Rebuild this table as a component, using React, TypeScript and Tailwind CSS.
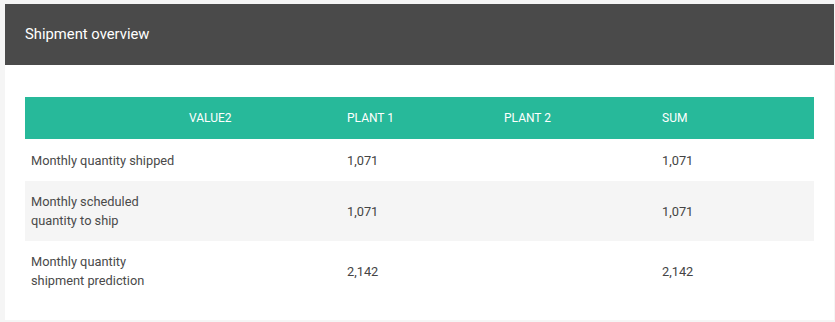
import React from "react";

const rows = [
  { label: ["Monthly quantity shipped"], p1: "1,071", p2: "", sum: "1,071", h: "h-[42px]", bg: "bg-white" },
  { label: ["Monthly scheduled", "quantity to ship"], p1: "1,071", p2: "", sum: "1,071", h: "h-[60px]", bg: "bg-[#f5f5f5]" },
  { label: ["Monthly quantity", "shipment prediction"], p1: "2,142", p2: "", sum: "2,142", h: "h-[60px]", bg: "bg-white" },
];

export default function App() {
  return (
    <div
      className="w-[835px] h-[322px] bg-[#f5f5f5] pt-[4px] pl-[5px] pr-[1px]"
      style={{ fontFamily: "Roboto, 'Liberation Sans', sans-serif" }}
    >
      <div className="bg-white h-[316px] w-[829px]">
        <div className="h-[61px] bg-[#4a4a4a] flex items-center pl-[20px] text-white text-[14.8px]">
          Shipment overview
        </div>
        <div className="pt-[32px] px-[20px]">
          <div className="grid grid-cols-[316px_157px_158px_158px] h-[42px] bg-[#27b99a] text-white text-[12px] items-center uppercase">
            <div className="pl-[164px]">Value2</div>
            <div className="pl-[6px]">Plant 1</div>
            <div className="pl-[6px]">Plant 2</div>
            <div className="pl-[6px]">Sum</div>
          </div>
          {rows.map((r, i) => (
            <div
              key={i}
              className={`grid grid-cols-[316px_157px_158px_158px] items-center text-[12.8px] leading-[19px] text-[#444] ${r.h} ${r.bg}`}
            >
              <div className="pl-[6px] text-[#4a4a4a]">
                {r.label.map((l, j) => (
                  <div key={j}>{l}</div>
                ))}
              </div>
              <div className="pl-[6px]">{r.p1}</div>
              <div className="pl-[6px]">{r.p2}</div>
              <div className="pl-[6px]">{r.sum}</div>
            </div>
          ))}
        </div>
      </div>
    </div>
  );
}
